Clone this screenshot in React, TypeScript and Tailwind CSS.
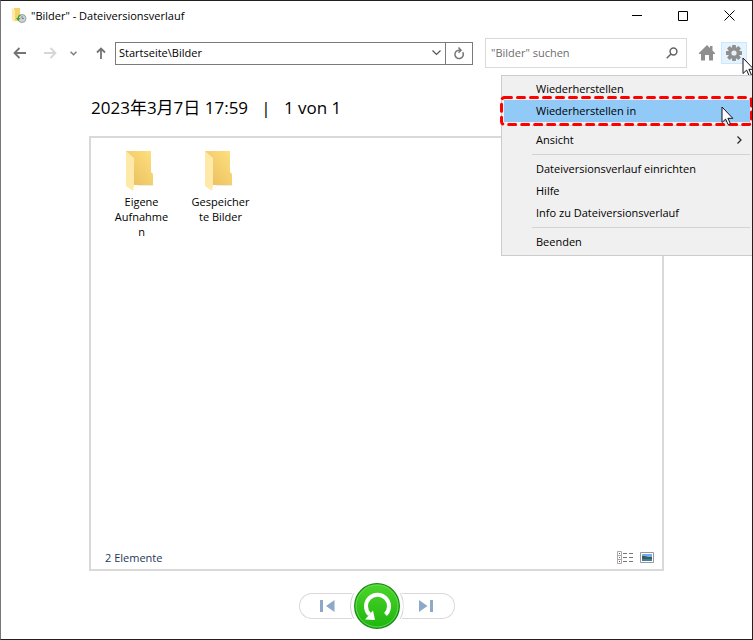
import React from "react";

function BackIcon({ flip = false, color }: { flip?: boolean; color: string }) {
  return (
    <svg width="14" height="12" viewBox="0 0 14 12" fill="none" stroke={color} strokeWidth="1.8" className={flip ? "-scale-x-100" : ""} aria-hidden="true">
      <path d="M13 6H1.5M6.5 1L1.5 6l5 5" />
    </svg>
  );
}

function CursorIcon() {
  return (
    <svg width="13" height="20" viewBox="0 0 13 20" aria-hidden="true">
      <path d="M1 1v15.5l3.6-3.4 2.6 5.6 2.2-1-2.5-5.4h4.9z" fill="#fff" stroke="#101018" strokeWidth="1" />
    </svg>
  );
}

function AppIcon() {
  return (
    <svg width="16" height="16" viewBox="0 0 16 16" aria-hidden="true">
      <path d="M3 0h6v13H3z" fill="#f3d26e" />
      <path d="M1 0l3 2v12l-3-2z" fill="#ffe9a6" />
      <circle cx="11" cy="10.5" r="4" fill="#cfd3d5" stroke="#9aa0a4" />
      <path d="M11 8v2.500h2" fill="none" stroke="#7d858a" />
      <path d="M5 10h4.500l-2.200 3z" fill="#36a63b" />
      <path d="M7.200 10a3 3 0 0 1 2.300-2.800" fill="none" stroke="#36a63b" strokeWidth="1.300" />
    </svg>
  );
}

function FolderIcon({ id }: { id: string }) {
  return (
    <svg width="30" height="42" viewBox="0 0 30 42" className="mr-1" aria-hidden="true">
      <defs>
        <linearGradient id={id} x1="0" y1="1" x2="1" y2="0">
          <stop offset="0" stopColor="#e8bd5a" />
          <stop offset="1" stopColor="#ffe081" />
        </linearGradient>
      </defs>
      <path d="M9 41l4-6h17l-3 1H13z" fill="#ececec" />
      <path d="M1 1h25v21l2 2v11H1z" fill={`url(#${id})`} />
      <path d="M1 1l8 7v27l-1 6-7-5z" fill="#ffe9a8" />
    </svg>
  );
}

function GearIcon() {
  return (
    <svg width="18" height="18" viewBox="-9 -9 18 18" fill="#8f8f8f" aria-hidden="true">
      {[0, 45, 90, 135].map((a) => (
        <rect key={a} x="-1.900" y="-8" width="3.800" height="16" rx="0.500" transform={`rotate(${a})`} />
      ))}
      <circle r="6" />
      <circle r="2.600" fill="#e5f3ff" />
    </svg>
  );
}

function TitleBar() {
  return (
    <header className="flex h-[29px] items-center pl-[10px] text-black">
      <AppIcon />
      <h1 className="ml-1 grow text-[11px] leading-4">"Bilder" - Dateiversionsverlauf</h1>
      <button aria-label="Minimieren" className="flex h-7 w-[46px] items-center justify-center">
        <svg width="10" height="10" stroke="#000" aria-hidden="true"><path d="M0 4.500h10" /></svg>
      </button>
      <button aria-label="Maximieren" className="flex h-7 w-[46px] items-center justify-center">
        <svg width="10" height="10" stroke="#000" fill="none" aria-hidden="true"><path d="M.5.5h9v9h-9z" /></svg>
      </button>
      <button aria-label="Schließen" className="flex h-7 w-[46px] items-center justify-center">
        <svg width="11" height="11" stroke="#000" aria-hidden="true"><path d="M.5.5l10 10M10.500.5l-10 10" /></svg>
      </button>
    </header>
  );
}

function Toolbar() {
  return (
    <nav className="mt-2 flex h-[30px] items-center pr-[5px] pl-3">
      <button aria-label="Zurück" className="w-[30px]"><BackIcon color="#747474" /></button>
      <button aria-label="Vorwärts" className="w-[27px]"><BackIcon flip color="#d6d6d6" /></button>
      <button aria-label="Verlauf" className="w-[26px]">
        <svg width="7" height="5" fill="none" stroke="#808080" strokeWidth="1.600" aria-hidden="true"><path d="M.5.7l3 3 3-3" /></svg>
      </button>
      <button aria-label="Nach oben" className="w-[19px]">
        <svg width="10" height="13" fill="none" stroke="#747474" strokeWidth="1.800" aria-hidden="true"><path d="M5 12V1.500M1 5.500l4-4 4 4" /></svg>
      </button>
      <div className="flex h-[23px] min-w-0 grow border border-[#7a7a7a]">
        <input aria-label="Adresse" defaultValue="Startseite\Bilder" className="min-w-0 grow px-[3px] text-[11px] text-black outline-none" />
        <button aria-label="Adressen anzeigen" className="flex w-[18px] items-center justify-center">
          <svg width="9" height="6" fill="none" stroke="#555" strokeWidth="1.200" aria-hidden="true"><path d="M.5.5l4 4 4-4" /></svg>
        </button>
        <button aria-label="Aktualisieren" className="flex w-[27px] items-center justify-center border-l border-[#7a7a7a]">
          <svg width="12" height="13" viewBox="0 0 12 13" fill="none" stroke="#777" strokeWidth="1.500" aria-hidden="true">
            <path d="M9.700 5.200A4.200 4.200 0 1 1 6 3.200h1.500" /><path d="M5.500.5l2.500 2.700-2.500 2.600" />
          </svg>
        </button>
      </div>
      <div className="ml-3 flex h-[30px] w-[202px] items-center border border-[#d9d9d9] pr-2 pl-[5px]">
        <input aria-label="Suchen" placeholder='"Bilder" suchen' className="min-w-0 grow text-[11px] outline-none placeholder:text-[#6d6d6d]" />
        <svg width="12" height="12" fill="none" stroke="#666" strokeWidth="1.500" aria-hidden="true"><circle cx="7.500" cy="4.500" r="3.400" /><path d="M5 7L.7 11.300" /></svg>
      </div>
      <button aria-label="Startseite" className="ml-[10px] flex h-[22px] w-5 items-center justify-center">
        <svg width="16" height="16" fill="#8f8f8f" aria-hidden="true"><path d="M8 0l3 3V1h2.500v4.500L16 8v1h-2v6.500h-4V10H6v5.500H2V9H0V8z" /></svg>
      </button>
      <button aria-label="Einstellungen" className="ml-1 flex h-[22px] w-[26px] items-center justify-center border border-[#cce8ff] bg-[#e5f3ff]"><GearIcon /></button>
    </nav>
  );
}

function MenuItem({ label, active = false, more = false }: { label: string; active?: boolean; more?: boolean }) {
  return (
    <li role="none">
      <button role="menuitem" className={`flex h-[22px] w-full items-center justify-between pr-2 pl-8 text-left text-[11px] leading-4 text-black ${active ? "bg-[#91c9f7]" : ""}`}>
        {label}
        {more && <svg width="5" height="8" fill="none" stroke="#222" strokeWidth="1.200" aria-hidden="true"><path d="M.5.5L4 4 .5 7.500" /></svg>}
      </button>
    </li>
  );
}

function Separator() {
  return <li role="separator" className="ml-7 flex h-[7px] items-center"><span className="h-px w-full bg-[#d3d3d3]" /></li>;
}

function SettingsMenu() {
  return (
    <div className="absolute top-[74px] -right-px w-[252px]">
      <ul role="menu" className="border border-[#ccc] bg-[#f0f0f0] p-[2px]">
        <MenuItem label="Wiederherstellen" />
        <MenuItem label="Wiederherstellen in" active />
        <Separator />
        <MenuItem label="Ansicht" more />
        <Separator />
        <MenuItem label="Dateiversionsverlauf einrichten" />
        <MenuItem label="Hilfe" />
        <MenuItem label="Info zu Dateiversionsverlauf" />
        <Separator />
        <MenuItem label="Beenden" />
      </ul>
      <svg className="absolute top-[21px] right-0" width="253" height="31" fill="none" aria-hidden="true">
        <rect x="1.500" y="1.500" width="250" height="27" rx="3" stroke="#f00" strokeWidth="3" strokeDasharray="7 6" strokeLinecap="round" />
      </svg>
      <span className="absolute top-[31px] right-[19px]"><CursorIcon /></span>
    </div>
  );
}

function Folder({ id, name }: { id: string; name: string }) {
  return (
    <li className="flex w-[59px] flex-col items-center text-center text-[11px] leading-[15px] text-black">
      <FolderIcon id={id} />
      <span className="mt-[2px] w-full break-words">{name}</span>
    </li>
  );
}

function Playback() {
  return (
    <footer className="flex h-[68px] shrink-0 items-center justify-center pt-[2px]">
      <button aria-label="Vorherige Version" className="-mr-[2px] flex h-[26px] w-[53px] items-center justify-center rounded-l-full border border-r-0 border-[#d9d9d9] pl-[3px]">
        <svg width="15" height="12" fill="#8ea9c8" aria-hidden="true"><path d="M0 0h3v12H0zM14.500 0v12L6 6z" /></svg>
      </button>
      <button aria-label="Wiederherstellen" className="relative z-10 flex size-[54px] items-center justify-center rounded-full">
        <span className="absolute inset-0 rounded-full border border-[#d0d0d0] bg-white [clip-path:inset(14px_0)]" />
        <svg width="46" height="46" viewBox="0 0 46 46" className="relative" aria-hidden="true">
          <defs><linearGradient id="green" x1="0" y1="0" x2="0" y2="1"><stop offset="0" stopColor="#4cd52c" /><stop offset="1" stopColor="#1db60e" /></linearGradient></defs>
          <circle cx="23" cy="23" r="22.300" fill="url(#green)" stroke="#158c14" strokeWidth="1.300" />
          <circle cx="23" cy="23" r="21" fill="none" stroke="#75dc60" strokeWidth="0.800" />
          <path d="M31.500 31.500A11.500 11.500 0 1 0 15.500 31.500" fill="none" stroke="#fff" strokeWidth="4" />
          <path d="M11 36.500l10 .5-2-9.500z" fill="#fff" />
        </svg>
      </button>
      <button aria-label="Nächste Version" className="-ml-[2px] flex h-[26px] w-[53px] items-center justify-center rounded-r-full border border-l-0 border-[#d9d9d9] pr-[3px]">
        <svg width="15" height="12" fill="#8ea9c8" aria-hidden="true"><path d="M0 0l8.500 6L0 12zM11 0h3v12h-3z" /></svg>
      </button>
    </footer>
  );
}

export default function App() {
  return (
    <div className="relative flex min-h-screen flex-col overflow-hidden border border-[#202020] border-l-[#777] bg-white font-['Open_Sans','Noto_Sans_CJK_SC',sans-serif]">
      <TitleBar />
      <Toolbar />
      <main className="mx-[88px] flex grow flex-col">
        <h2 className="mt-7 pl-[2px] text-[17px] leading-6 whitespace-pre text-black">2023年3月7日 17:59   |   1 von 1</h2>
        <section className="mt-4 flex grow flex-col border-2 border-[#d9d9d9]">
          <ul className="flex grow items-start gap-5 pt-3 pl-[21px]">
            <Folder id="folder-a" name="Eigene Aufnahmen" />
            <Folder id="folder-b" name="Gespeicherte Bilder" />
          </ul>
          <div className="flex h-[23px] items-center pr-2 pl-[14px]">
            <p className="grow text-[11px] leading-4 text-[#1e395b]">2 Elemente</p>
            <button aria-label="Details" className="mr-[7px]">
              <svg width="16" height="13" fill="none" aria-hidden="true">
                <path d="M.5.5h4v12h-4zM.5 4.500h4M.5 8.500h4" stroke="#aaa" />
                <path d="M6 2.500h4M12 2.500h4M6 6.500h4M12 6.500h4M6 10.500h4M12 10.500h4" stroke="#777" />
                <path d="M2 2h1v1H2z" fill="#555" /><path d="M2 6h1v1H2z" fill="#38c" /><path d="M2 10h1v1H2z" fill="#c22" />
              </svg>
            </button>
            <button aria-label="Große Symbole">
              <svg width="14" height="11" aria-hidden="true"><path d="M.5.5h13v10H.5z" fill="#fff" stroke="#999" /><path d="M2 2h10v3H2z" fill="#72aef0" /><path d="M2 4h3l3 1h4v2H2z" fill="#37614c" /><path d="M2 7h10v2H2z" fill="#437bb0" /></svg>
            </button>
          </div>
        </section>
      </main>
      <Playback />
      <span className="absolute top-[56px] -right-[3px]"><CursorIcon /></span>
      <SettingsMenu />
    </div>
  );
}
